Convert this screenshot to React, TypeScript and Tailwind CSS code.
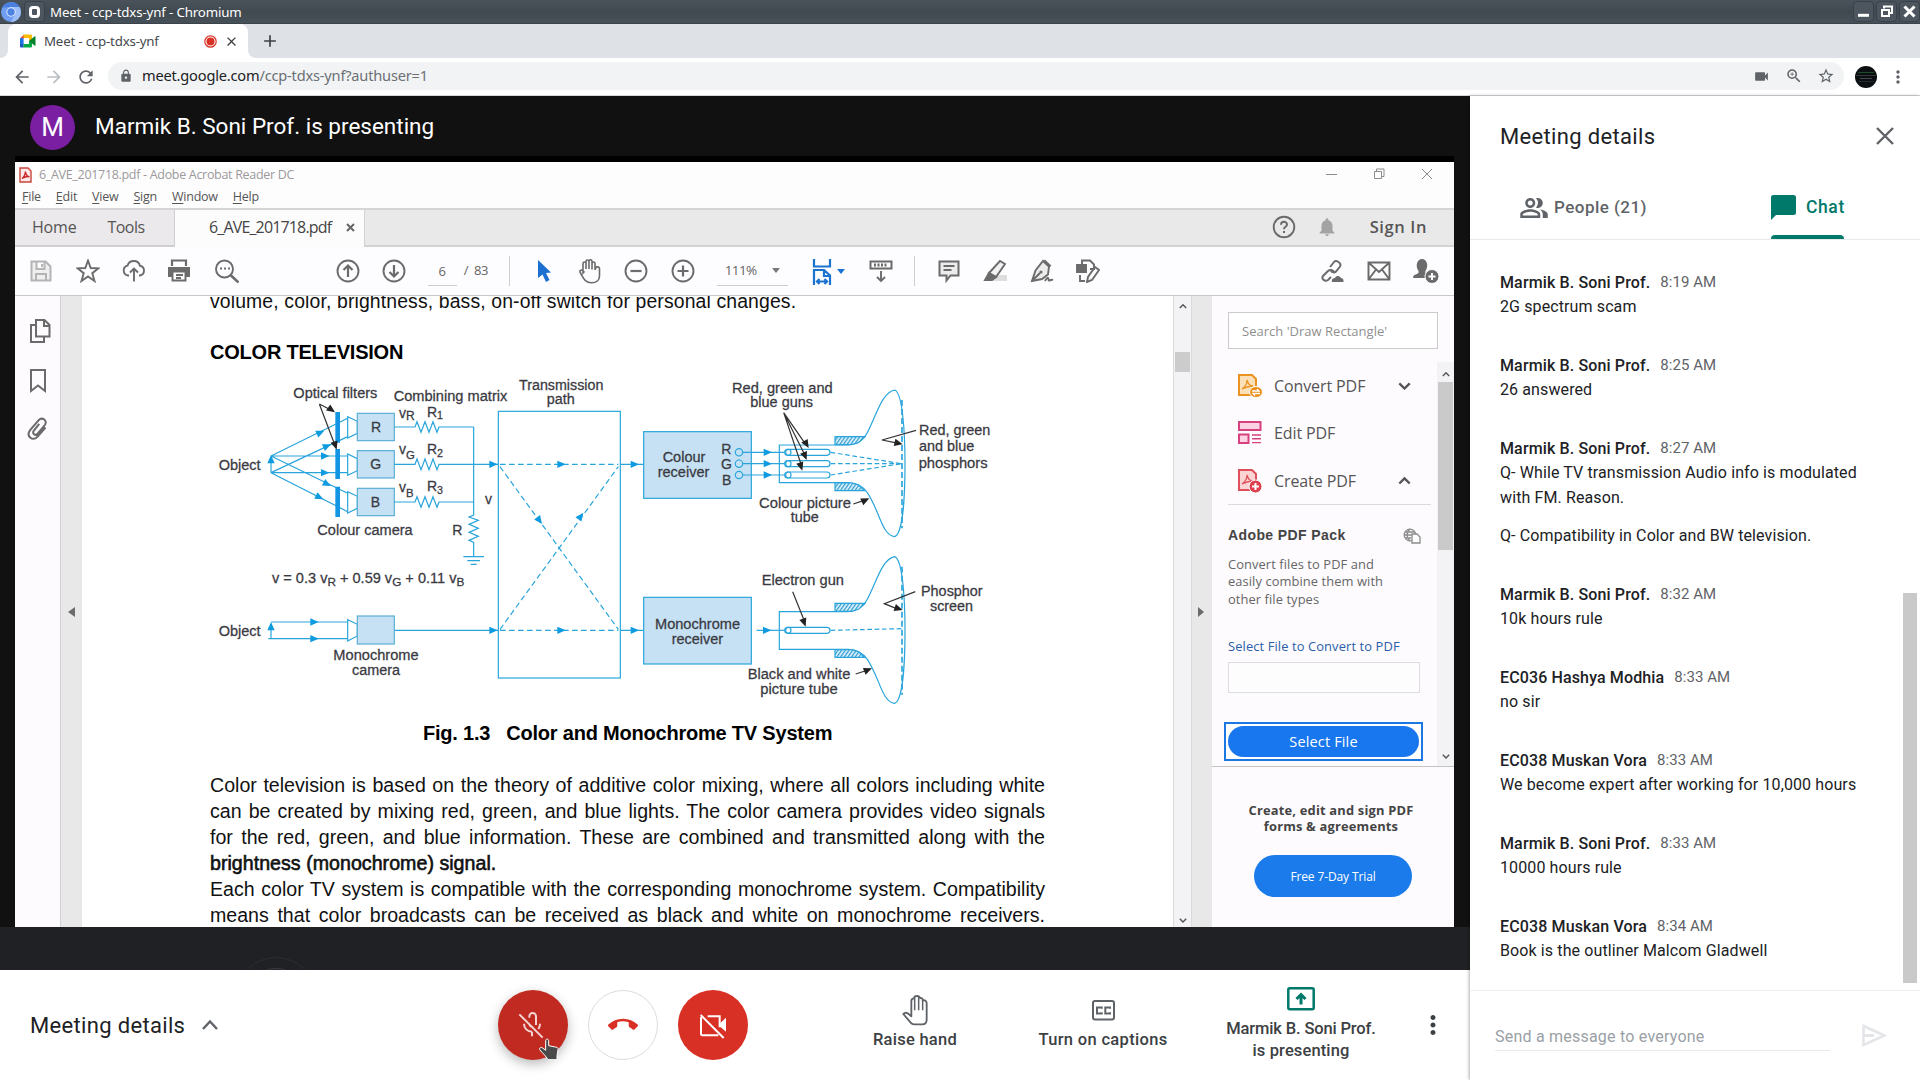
import React from "react";
import {
  MdArrowBack,
  MdArrowForward,
  MdRefresh,
  MdLock,
  MdVideocam,
  MdZoomIn,
  MdStarBorder,
  MdMoreVert,
  MdClose,
  MdAdd,
  MdOutlinePeopleAlt,
  MdCallEnd,
  MdNotifications,
} from "react-icons/md";

const UI = "font-['Noto_Sans',sans-serif]";
const SEGOE = "font-['Open_Sans','Noto_Sans',sans-serif]";

/* ---------- Browser chrome ---------- */

function TitleBar() {
  return (
    <div className={`flex h-6 shrink-0 items-center bg-linear-to-b from-[#4a525b] via-[#414950] to-[#465058] border-b border-[#3b4248] ${UI}`}>
      <svg className="ml-px" width="20" height="20" viewBox="0 0 20 20">
        <circle cx="10" cy="10" r="10" fill="#6f9df0" />
        <path d="M1.2 5.4A10 10 0 0 1 18.6 5H10z" fill="#4a7fe0" />
        <path d="M10 20A10 10 0 0 0 18.6 5H10l4 7z" fill="#9dbdf7" />
        <circle cx="10" cy="10" r="4.7" fill="#dfe9fc" />
        <circle cx="10" cy="10" r="3.7" fill="#4c82e4" />
      </svg>
      <div className="ml-[3px] grid h-[21px] w-[21px] place-items-center rounded-sm border border-[#39414a] bg-[#4d565e]">
        <div className="h-[12px] w-[11px] rounded-[4px] border-[3px] border-white" />
      </div>
      <span className="ml-[5px] pt-px text-[13.3px] leading-6 tracking-[-0.15px] text-white">Meet - ccp-tdxs-ynf - Chromium</span>
      <div className="ml-auto flex gap-[2px]">
        {[0, 1, 2].map((i) => (
          <div key={i} className="grid h-[21px] w-[21px] place-items-center rounded-sm border border-[#39414a] bg-[#4d565e]">
            <svg width="13" height="13" viewBox="0 0 13 13" fill="none" stroke="#fff">
              {i === 0 && <path d="M1 10.3h11" strokeWidth="3" />}
              {i === 1 && (
                <>
                  <path d="M4 3.5V1.5h8v6.500h-2" strokeWidth="2" />
                  <rect x="2" y="5" width="7" height="6" strokeWidth="2" />
                </>
              )}
              {i === 2 && <path d="M1.500 1.500l10 10M11.500 1.500l-10 10" strokeWidth="3" />}
            </svg>
          </div>
        ))}
      </div>
    </div>
  );
}

function TabStrip() {
  return (
    <div className={`flex h-[34px] shrink-0 bg-[#dee1e6] ${UI}`}>
      <div className="flex w-2 items-end bg-white">
        <div className="h-full w-2 rounded-br-lg bg-[#dee1e6]" />
      </div>
      <div className="flex w-[240px] items-center rounded-t-lg bg-white">
        <svg className="ml-3" width="16" height="14" viewBox="0 0 16 14">
          <path d="M4 1v3.500H0L3.500 1z" fill="#ea4335" />
          <path d="M0 4.200h3.600v5.600H0z" fill="#1a73e8" />
          <path d="M0 9.500h3.600V13.500H1a1 1 0 0 1-1-1z" fill="#1558c0" />
          <path d="M3.500.5H11a1 1 0 0 1 1 1v5l-3 .5V4H3.500z" fill="#fbbc04" />
          <path d="M3.500 10H9V7l3-.5v6a1 1 0 0 1-1 1H3.500z" fill="#00ac47" />
          <path d="M9 7l5.500-4.600c.5-.4 1-.1 1 .4v8.400c0 .5-.5.800-1 .4z" fill="#00832d" />
        </svg>
        <span className="ml-2 pt-px text-[13.300px] tracking-[-0.200px] text-[#45494d]">Meet - ccp-tdxs-ynf</span>
        <svg className="ml-auto" width="13" height="13" viewBox="0 0 13 13">
          <circle cx="6.500" cy="6.500" r="5.700" fill="none" stroke="#d93025" strokeWidth="1.200" />
          <circle cx="6.500" cy="6.500" r="4" fill="#d93025" />
        </svg>
        <MdClose className="mr-[9px] ml-[7px] text-[#3c4043]" size={15} />
      </div>
      <div className="w-2 bg-white">
        <div className="h-full rounded-bl-lg bg-[#dee1e6]" />
      </div>
      <MdAdd className="mt-[7px] ml-[4px] text-[#3c4043]" size={20} />
    </div>
  );
}

function AddressBar() {
  return (
    <div className={`flex h-[38px] shrink-0 items-center border-b border-[#d5d7da] bg-white ${UI}`}>
      <MdArrowBack className="ml-[12px] text-[#5f6368]" size={20} />
      <MdArrowForward className="ml-[12px] text-[#bcbfc2]" size={20} />
      <MdRefresh className="ml-[12px] text-[#5f6368]" size={20} />
      <div className="-mt-px ml-[12px] flex h-7 w-[1736px] items-center rounded-full bg-[#f1f3f4]">
        <MdLock className="ml-[11px] text-[#5f6368]" size={14} />
        <span className="ml-[9px] text-[14.600px] tracking-[-0.190px] text-[#6b7074]">
          <span className="text-[#202124]">meet.google.com</span>/ccp-tdxs-ynf?authuser=1
        </span>
        <MdVideocam className="ml-auto text-[#5f6368]" size={17} />
        <MdZoomIn className="ml-[15px] text-[#5f6368]" size={18} />
        <MdStarBorder className="mr-[9px] ml-[14px] text-[#5f6368]" size={18} />
      </div>
      <div className="ml-[11px] flex h-[22px] w-[22px] flex-col items-center justify-center gap-[2px] overflow-hidden rounded-full bg-[#0c0f12]">
        <div className="h-px w-4 bg-[#1e4a28]" />
        <div className="h-px w-5 bg-[#33383d]" />
        <div className="h-px w-3 bg-[#3f454b]" />
        <div className="h-px w-4 bg-[#24292d]" />
      </div>
      <MdMoreVert className="ml-[11px] text-[#5f6368]" size={20} />
    </div>
  );
}

/* ---------- Acrobat ---------- */

function Glyph({ children, w = 24, h = 24, className = "" }: { children: React.ReactNode; w?: number; h?: number; className?: string }) {
  return (
    <svg className={className} width={w} height={h} viewBox={`0 0 ${w} ${h}`} fill="none" stroke="#6b6b6b" strokeWidth="1.900">
      {children}
    </svg>
  );
}

function Slot({ children }: { children: React.ReactNode }) {
  return <div className="flex w-[46.5px] shrink-0 items-center justify-center">{children}</div>;
}

function AcrobatTitle() {
  return (
    <div className={`h-[46px] bg-[#fefdfe] ${SEGOE}`}>
      <div className="flex h-[25px] items-center">
        <svg className="ml-[4px]" width="13" height="16" viewBox="0 0 13 16">
          <path d="M1 1h8l3 3v11H1z" fill="#fde9e7" stroke="#c8433b" strokeWidth="1.400" />
          <path d="M3 11.500c2-1.500 3.300-4 3.400-7 .5 3 2 5 4 5.200-2-.4-4.600.2-7.400 1.800z" fill="none" stroke="#c8262a" strokeWidth="1.400" />
        </svg>
        <span className="ml-[7px] pt-[2px] text-[12.500px] tracking-[-0.310px] text-[#9b999b]">6_AVE_201718.pdf - Adobe Acrobat Reader DC</span>
        <svg className="-mt-[2px] mr-[21px] ml-auto" width="107" height="12" viewBox="0 0 107 12" fill="none" stroke="#8b8b8b">
          <path d="M0 6.500h11M48.500 3.500h7v7h-7zM50.500 3V1h7.500v7.500h-2M96 1l10 10M106 1L96 11" />
        </svg>
      </div>
      <div className="flex h-[21px] items-center gap-[15px] pl-[7px] text-[12.500px] tracking-[-0.240px] text-[#555]">
        {["File", "Edit", "View", "Sign", "Window", "Help"].map((m) => (
          <span key={m}>
            <u className="underline-offset-2">{m[0]}</u>
            {m.slice(1)}
          </span>
        ))}
      </div>
    </div>
  );
}

function AcrobatTabs() {
  return (
    <div className={`flex h-[39px] items-stretch border-t-2 border-[#d6d5d6] bg-[#e9e9e9] text-[16px] text-[#555] ${SEGOE}`}>
      <div className="flex w-[160px] items-center border-r border-b-2 border-[#d0cfd0] bg-[#ebe9eb] pb-px">
        <span className="ml-[17px] tracking-[-0.200px]">Home</span>
        <span className="ml-[31px] tracking-[-0.500px]">Tools</span>
      </div>
      <div className="flex w-[189px] items-center bg-[#fdfcfd] pb-[3px]">
        <span className="ml-[34px] tracking-[-0.850px] text-[#444]">6_AVE_201718.pdf</span>
        <svg className="ml-[15px]" width="9" height="9" viewBox="0 0 9 9" stroke="#666" strokeWidth="2">
          <path d="M1 1l7 7M8 1L1 8" />
        </svg>
      </div>
      <div className="flex flex-1 items-center border-b-2 border-l border-[#d4d3d4] pb-px">
        <Glyph w={24} h={24} className="ml-auto">
          <circle cx="12" cy="12" r="10.300" />
          <path d="M9 9.700c0-4 6-3.800 6-.3 0 2.400-3 2.200-3 4.800M12 16v2" strokeWidth="2" />
        </Glyph>
        <MdNotifications className="ml-[20px] text-[#a3a3a3]" size={22} />
        <span className="mr-[27px] ml-[32px] text-[16.500px] font-semibold tracking-[0.600px] text-[#555]">Sign In</span>
      </div>
    </div>
  );
}

function AcrobatToolbar() {
  return (
    <div className={`flex h-[49px] items-center border-b border-[#c9c8c9] bg-[#fdfcfe] ${SEGOE}`}>
      <div className="w-[2.750px]" />
      <Slot>
        <svg width="22" height="22" viewBox="0 0 22 22" fill="#f0eff0" stroke="#b5b4b5" strokeWidth="2">
          <path d="M1.500 1.500h14l5 5v14h-19zM6.500 2v7h8V2M6 20v-6h10v6M12 4v3" />
        </svg>
      </Slot>
      <Slot>
        <Glyph>
          <path d="M12 1.500l2.700 7.500 7.800.3-6.200 4.900 2.200 7.800-6.500-4.500L5.500 22l2.200-7.800-6.200-4.900L9.300 9z" />
        </Glyph>
      </Slot>
      <Slot>
        <Glyph>
          <path d="M7 16.500H6a5 5 0 0 1-.5-9.800A6.500 6.500 0 0 1 18 6.700a5 5 0 0 1 0 9.800h-1M12 22.500V10M8 13.500l4-4 4 4" />
        </Glyph>
      </Slot>
      <Slot>
        <Glyph className="-ml-[3px]">
          <path d="M5 7V1.500h14V7" strokeWidth="2.200" />
          <path d="M1 8h22v10h-4v-5H5v5H1z" fill="#6b6b6b" stroke="none" />
          <path d="M5.500 12.500h13v9h-13zM9 16h7M9 19h5" />
        </Glyph>
      </Slot>
      <Slot>
        <Glyph>
          <circle cx="9.500" cy="10" r="8.500" />
          <path d="M15.500 16l8 7.500" strokeWidth="2.600" />
          <path d="M5 9.500h2M9 9.500h2M13 9.500h2" />
        </Glyph>
      </Slot>
      <div className="w-[74.500px]" />
      <Slot>
        <Glyph>
          <circle cx="12" cy="12" r="10.500" />
          <path d="M12 18V6.500M7.500 11L12 6.500l4.500 4.500" strokeWidth="2.200" />
        </Glyph>
      </Slot>
      <Slot>
        <Glyph className="-ml-px">
          <circle cx="12" cy="12" r="10.500" />
          <path d="M12 6v11.500M7.500 13l4.500 4.500 4.500-4.500" strokeWidth="2.200" />
        </Glyph>
      </Slot>
      <div className="ml-[10px] h-[29px] w-[29px] border-b border-[#cfcecf] text-center text-[13px] leading-[29px] text-[#666]">6</div>
      <span className="ml-[7px] w-[45px] text-[13px] tracking-[-0.400px] whitespace-pre text-[#666]">/  83</span>
      <div className="h-[30px] w-px bg-[#cfcecf]" />
      <div className="w-[10px]" />
      <Slot>
        <svg className="ml-[3px]" width="15" height="22" viewBox="0 0 15 22" fill="#1a6fd0">
          <path d="M1 0l13 12.500-5 .5 3.500 7-3.500 2-3.500-7.500L1 18z" />
        </svg>
      </Slot>
      <Slot>
        <Glyph w={26} h={26}>
          <path
            d="M7 15V5.500c0-2 3-2 3 0V11 3.500c0-2 3-2 3 0V11 3.200c0-2 3-2 3 0V11.500 5.500c0-2 3-2 3 0V12c0-4 5-4 4.500-1v7c0 4-3 6.800-8 6.800-7 0-8-5-11-9.800-2-3 1.500-4 3.500-1z"
            strokeWidth="1.600"
            transform="translate(-1 0)"
          />
        </Glyph>
      </Slot>
      <Slot>
        <Glyph>
          <circle cx="12" cy="12" r="10.500" />
          <path d="M6.500 12h11" strokeWidth="2.200" />
        </Glyph>
      </Slot>
      <Slot>
        <Glyph>
          <circle cx="12" cy="12" r="10.500" />
          <path d="M6.500 12h11M12 6.500v11" strokeWidth="2.200" />
        </Glyph>
      </Slot>
      <div className="ml-[11px] flex h-[29px] w-[71px] items-center justify-between border-b border-[#cfcecf] pr-[8px] pl-[8px] text-[13.500px] tracking-[-0.600px] text-[#666]">
        111%
        <svg width="8" height="5" fill="#777">
          <path d="M0 0h8L4 5z" />
        </svg>
      </div>
      <div className="ml-[24px] flex w-[33px] items-center justify-between">
        <svg width="20" height="27" viewBox="0 0 20 27" fill="none" stroke="#1a73d0" strokeWidth="2.200">
          <path d="M2 1v7.500h16V1M2 27V12h10l6 5.500V27M12 12v6h6M5 23.500h10M7.500 21L5 23.500 7.500 26M12.500 21l2.500 2.500-2.500 2.500" />
        </svg>
        <svg width="8" height="5" fill="#1a73d0">
          <path d="M0 0h8L4 5z" />
        </svg>
      </div>
      <div className="ml-[13px]" />
      <Slot>
        <Glyph>
          <path d="M1.500 2.500h21v7h-21z" strokeWidth="2" />
          <path d="M5 6h14" strokeDasharray="2 1.500" strokeWidth="3" />
          <path d="M12 12v10M8 18l4 4 4-4" />
        </Glyph>
      </Slot>
      <div className="ml-[10px] h-[30px] w-px bg-[#cfcecf]" />
      <div className="w-[10px]" />
      <Slot>
        <Glyph>
          <path d="M2.500 2.500h19v14h-8l-4 5v-5h-7z" fill="#ececec" strokeWidth="2" />
          <path d="M6.500 7h11M6.500 11h8" />
        </Glyph>
      </Slot>
      <Slot>
        <Glyph>
          <path d="M12 16h12v6H8z" fill="#dedede" stroke="none" />
          <path d="M6 14L17 2l5 3-9 13z" fill="#f2f2f2" />
          <path d="M6 14l-4 7h7l4-3z" fill="#6b6b6b" />
        </Glyph>
      </Slot>
      <Slot>
        <Glyph>
          <path d="M13 2l6 5.500-1 8-6 4.500-10 2 3.500-10.500z" fill="#ececec" />
          <path d="M2 22l8-8M15 22c2-4 3.500-4 3.500-1.500s2-.5 4.500.5" />
          <circle cx="11" cy="13" r="1.600" fill="#6b6b6b" stroke="none" />
          <path d="M14 1.500l6.500 6" strokeWidth="2.400" />
        </Glyph>
      </Slot>
      <Slot>
        <Glyph>
          <path d="M6 6V1.500h8l4 4V10h-4" />
          <path d="M1 6h9v7H1z" fill="#6b6b6b" />
          <path d="M4 16v6h5M19 8l4 3-7 10-5 2 1-5z" />
        </Glyph>
      </Slot>
      <div className="ml-auto" />
      <Slot>
        <Glyph>
          <path d="M10 8l4-5c2-2.500 8 1 6 4.500l-4 5c-1.500 1.500-4 1-5-.5M14 13c-1-2-4-3-6-1l-5 5c-2 3 2 6 5 4l3-3" strokeWidth="2" />
          <path d="M12 23c-1-4 3-4 3-4 2-4 6-1 6 0 3 0 3 4 2 4z" fill="#6b6b6b" stroke="none" />
        </Glyph>
      </Slot>
      <Slot>
        <Glyph>
          <path d="M1.500 3.500h21v17h-21zM1.500 3.500L12 13 22.500 3.500M1.500 20.500l7.500-10M22.500 20.500l-7.500-10" />
        </Glyph>
      </Slot>
      <Slot>
        <Glyph w={26} className="ml-px">
          <path d="M0 19c0-5 7-3 5.500-7C2 7 4 0 9 0s7 7 3.500 12c-1 2 1 3 2 3v4z" fill="#6b6b6b" stroke="none" />
          <circle cx="19" cy="17.500" r="7" fill="#6b6b6b" stroke="#fff" strokeWidth="1" />
          <path d="M15.500 17.500h7M19 14v7" stroke="#fff" />
        </Glyph>
      </Slot>
      <div className="w-[5.750px]" />
    </div>
  );
}

function LeftRail() {
  return (
    <>
      <div className="flex w-[46px] shrink-0 flex-col items-center border-r border-[#d3d2d3] bg-[#fdfbfe] pt-[22px]">
        <Glyph w={22} h={26} className="ml-[4px]">
          <path d="M7 2h8.500l5 5v11.500H7zM15 2v6h5.500M7 7H2v17h13v-5" strokeWidth="2" />
        </Glyph>
        <Glyph w={18} h={26} className="mt-[24px]">
          <path d="M2 2h14v21l-7-5.500L2 23z" strokeWidth="2" />
        </Glyph>
        <Glyph w={24} h={26} className="mt-[22px]">
          <path
            d="M13.500 8L7.500 14.500c-2 3 1.500 5.500 3.700 3.200L19 9.500c3.500-4-2-9-6-5L4 13.500c-5 6 2 12 7 7l8.500-8.500"
            transform="rotate(-4 12 12)"
            strokeWidth="2"
          />
        </Glyph>
      </div>
      <div className="flex w-[21px] shrink-0 items-center bg-[#e8e8e9]">
        <svg className="ml-[7px]" width="7" height="10" fill="#6b6b6b">
          <path d="M7 0v10L0 5z" />
        </svg>
      </div>
    </>
  );
}

const RES = "l6 -16 12 32 12 -32 12 32 12 -32 12 32 6 -16";

function L({ x, y, w, children, s = 42 }: { x: number; y: number; w?: number; children: React.ReactNode; s?: number }) {
  return (
    <text x={x} y={y} fontSize={s} textLength={w} lengthAdjust="spacingAndGlyphs" stroke="#3a3a42" strokeWidth="0.8" fill="#3a3a42">
      {children}
    </text>
  );
}

function Head({ x, y, a = 0, c = "#0e9be0" }: { x: number; y: number; a?: number; c?: string }) {
  return <path d="M0 0L-25 -11V11Z" transform={`translate(${x} ${y}) rotate(${a})`} fill={c} stroke="none" />;
}

function Tube() {
  return (
    <>
      <path
        d="M1738 465H1945Q1985 462 2002 428C2030 375 2045 308 2084 300C2108 308 2115 430 2115 521C2115 620 2108 732 2084 740C2045 735 2040 665 2002 608Q1980 578 1945 578H1738Z"
        fill="#fff"
      />
      <path d="M2106 330V715" strokeDasharray="18 9" strokeWidth="5" />
      <path d="M1905 464V440H1995L1975 458L1955 464ZM1905 579V602H1993L1975 585L1955 579Z" fill="url(#hatch)" />
    </>
  );
}

function Gun({ y }: { y: number }) {
  return (
    <>
      <rect x="1754" y={y - 9} width="136" height="18" rx="9" fill="#fff" />
      <ellipse cx="1765" cy={y} rx="8" ry="9" />
    </>
  );
}

function Diagram() {
  return (
    <svg className="block" width="835" height="345" viewBox="30 234 2505 1035" fill="none" stroke="#2aa5dc" strokeWidth="3.600" fontFamily="Liberation Sans">
      <defs>
        <pattern id="hatch" width="9" height="9" patternUnits="userSpaceOnUse" patternTransform="rotate(35)">
          <rect width="9" height="9" fill="#e5f4fc" stroke="none" />
          <path d="M2 0V9" stroke="#1c93cf" strokeWidth="3.500" />
        </pattern>
      </defs>

      <L x={280} y={325} w={252}>Optical filters</L>
      <L x={581} y={332} w={341}>Combining matrix</L>
      <L x={957} y={300} w={253}>Transmission</L>
      <L x={1040} y={343} w={84}>path</L>
      <L x={56} y={540} w={126}>Object</L>
      <L x={352} y={735} w={286}>Colour camera</L>
      <L x={56} y={1038} w={126}>Object</L>
      <L x={400} y={1110} w={256}>Monochrome</L>
      <L x={456} y={1154} w={144}>camera</L>

      <path d="M213 548V505M213 498L443 385M213 548L443 440M213 498H443M213 548H443M213 498L443 610M213 548L443 665" />
      <Head x={213} y={495} a={-90} />
      <Head x={373} y={422} a={-25} />
      <Head x={393} y={463} a={-24} />
      <Head x={388} y={498} />
      <Head x={388} y={548} />
      <Head x={393} y={588} a={27} />
      <Head x={370} y={628} a={27} />
      <path d="M413 366V458M413 477V567M413 590V681" strokeWidth="14" stroke="#1296e4" />
      {[0, 112, 225].map((dy) => (
        <g key={dy} transform={`translate(0 ${dy})`}>
          <path d="M443 380V444L472 430V394Z" fill="#fff" />
          <rect x="472" y="370" width="111" height="82" fill="#c5e1f3" stroke="#5aaed6" />
          <path d={`M583 411H645 ${RES}H821`} />
        </g>
      ))}
      <path d="M821 411V675l-14 6 28 10-28 12 28 12-28 12 28 12-28 12 14 6V800M790 800H852M802 812H840M812 823H830" />
      <L x={513} y={427}>R</L>
      <L x={511} y={538}>G</L>
      <L x={512} y={651}>B</L>
      <L x={597} y={383}>v</L>
      <L x={618} y={390} s={36}>R</L>
      <L x={597} y={492}>v</L>
      <L x={618} y={506} s={34}>G</L>
      <L x={597} y={606}>v</L>
      <L x={618} y={621} s={34}>B</L>
      <L x={681} y={381}>R</L>
      <L x={711} y={388} s={32}>1</L>
      <L x={681} y={492}>R</L>
      <L x={711} y={501} s={32}>2</L>
      <L x={681} y={602}>R</L>
      <L x={711} y={612} s={32}>3</L>
      <L x={757} y={736}>R</L>
      <L x={855} y={643}>v</L>
      <text x="216" y="878" fontSize="42" textLength="577" lengthAdjust="spacingAndGlyphs" stroke="#3a3a42" strokeWidth="0.8" fill="#3a3a42">
        v = 0.3 v<tspan fontSize="34" dy="10">R</tspan>
        <tspan dy="-10"> + 0.59 v</tspan>
        <tspan fontSize="34" dy="10">G</tspan>
        <tspan dy="-10"> + 0.11 v</tspan>
        <tspan fontSize="34" dy="10">B</tspan>
      </text>

      <path d="M358 342L400 364M358 342L408 474" stroke="#333" />
      <Head x={405} y={367} a={35} c="#222" />
      <Head x={410} y={479} a={72} c="#222" />

      <path d="M213 1046V1003M205 1046H443M213 996H443M583 1021H895" />
      <Head x={213} y={996} a={-90} />
      <Head x={356} y={996} />
      <Head x={356} y={1046} />
      <path d="M443 989V1053L472 1038V1003Z" fill="#fff" />
      <rect x="472" y="978" width="111" height="84" fill="#c5e1f3" stroke="#5aaed6" />

      <rect x="895" y="364" width="366" height="800" />
      <path d="M821 523H895M1261 523H1330M1261 1021H1330" />
      <path d="M900 523H1255M900 1021H1255M900 530L1255 1018M900 1018L1255 530" strokeDasharray="17 10" />
      <Head x={893} y={523} />
      <Head x={893} y={1021} />
      <Head x={1097} y={523} />
      <Head x={1097} y={1021} />
      <Head x={1026} y={702} a={54} />
      <Head x={1150} y={668} a={-54} />
      <Head x={1317} y={523} />
      <Head x={1317} y={1021} />

      <rect x="1331" y="425" width="323" height="200" fill="#c5e1f3" />
      <rect x="1331" y="922" width="323" height="200" fill="#c5e1f3" />
      <L x={1388} y={517} w={128}>Colour</L>
      <L x={1373} y={562} w={155}>receiver</L>
      <L x={1564} y={491}>R</L>
      <L x={1563} y={538}>G</L>
      <L x={1566} y={584}>B</L>
      <L x={1365} y={1016} w={255}>Monochrome</L>
      <L x={1415} y={1061} w={154}>receiver</L>

      <Tube />
      <g transform="translate(0 500)">
        <Tube />
      </g>
      {[487, 521, 555].map((y) => (
        <g key={y}>
          <circle cx="1617" cy={y} r="11" />
          <path d={`M1628 ${y}H1754`} />
          <Head x={1716} y={y} />
          <Gun y={y} />
          <path d={`M1892 ${y}L2104 521`} strokeDasharray="14 8" />
        </g>
      ))}
      <path d="M1670 1021H1754" />
      <Head x={1714} y={1021} />
      <Gun y={1021} />
      <path d="M1892 1021L2104 1016" strokeDasharray="14 8" />

      <L x={1596} y={309} w={302}>Red, green and</L>
      <L x={1651} y={350} w={188}>blue guns</L>
      <L x={2157} y={435} w={214}>Red, green</L>
      <L x={2157} y={483} w={166}>and blue</L>
      <L x={2156} y={534} w={207}>phosphors</L>
      <L x={1677} y={654} w={276}>Colour picture</L>
      <L x={1772} y={695} w={84}>tube</L>
      <L x={1685} y={885} w={247}>Electron gun</L>
      <L x={2163} y={919} w={185}>Phosphor</L>
      <L x={2190} y={962} w={129}>screen</L>
      <L x={1643} y={1168} w={308}>Black and white</L>
      <L x={1681} y={1212} w={232}>picture tube</L>

      <g stroke="#333">
        <path d="M1751 368L1815 460M1751 368L1812 490M1751 368L1804 525M2148 421L2046 450L2085 458M1960 642L1990 632M1778 905L1812 990M2146 905L2053 941L2088 955M1967 1152L1995 1143" />
      </g>
      <Head x={1826} y={474} a={60} c="#222" />
      <Head x={1820} y={510} a={68} c="#222" />
      <Head x={1807} y={542} a={72} c="#222" />
      <Head x={2108} y={463} a={14} c="#222" />
      <Head x={2008} y={625} a={-25} c="#222" />
      <Head x={1817} y={1010} a={70} c="#222" />
      <Head x={2108} y={960} a={18} c="#222" />
      <Head x={2016} y={1135} a={-22} c="#222" />
    </svg>
  );
}

const PARA_A = [
  "Color television is based on the theory of additive color mixing, where all colors including white",
  "can be created by mixing red, green, and blue lights. The color camera provides video signals",
  "for the red, green, and blue information. These are combined and transmitted along with the",
];
const PARA_B = [
  "Each color TV system is compatible with the corresponding monochrome system. Compatibility",
  "means that color broadcasts can be received as black and white on monochrome receivers.",
];

function Line({ children }: { children: React.ReactNode }) {
  return <p className="h-[26px] w-[835px] leading-[26px] whitespace-nowrap [text-align-last:justify]">{children}</p>;
}

function PdfPage() {
  return (
    <div className="h-[631px] w-[1091px] shrink-0 overflow-hidden bg-white pl-[128px] font-['Liberation_Sans',Arial,sans-serif] text-[19.600px] text-[#111]">
      <div className="-mt-[7px] h-[26px] text-[19.400px] leading-[25px] tracking-[0.130px]">volume, color, brightness, bass, on-off switch for personal changes.</div>
      <h2 className="mt-[24px] h-[26px] text-[20px] leading-[26px] font-bold tracking-[-0.220px] text-black">COLOR TELEVISION</h2>
      <div className="mt-[3px]">
        <Diagram />
      </div>
      <div className="mt-[7px] h-[26px] pl-[213px] text-[20px] leading-[26px] font-bold tracking-[-0.210px] whitespace-pre text-black">Fig. 1.3   Color and Monochrome TV System</div>
      <div className="mt-[26px]">
        {PARA_A.map((t) => (
          <Line key={t}>{t}</Line>
        ))}
        <p className="h-[26px] leading-[26px] tracking-[0.030px] [-webkit-text-stroke:0.600px_#111]">brightness (monochrome) signal.</p>
        {PARA_B.map((t) => (
          <Line key={t}>{t}</Line>
        ))}
      </div>
    </div>
  );
}

function Chevron({ up = false, w = 13, c = "#555" }: { up?: boolean; w?: number; c?: string }) {
  return (
    <svg width={w} height={w * 0.6} viewBox="0 0 10 6" fill="none" stroke={c} strokeWidth="1.800">
      <path d={up ? "M1 5l4-4 4 4" : "M1 1l4 4 4-4"} />
    </svg>
  );
}

function ToolRow({ icon, label, chev }: { icon: React.ReactNode; label: string; chev?: "up" | "down" }) {
  return (
    <div className="flex h-[47.500px] items-center pl-[9px]">
      <div className="w-[37px]">{icon}</div>
      <span className="text-[16px] tracking-[-0.100px] text-[#555]">{label}</span>
      {chev && (
        <div className="mr-[26px] ml-auto">
          <Chevron up={chev === "up"} />
        </div>
      )}
    </div>
  );
}

function PdfIcon({ stroke, fill, children }: { stroke: string; fill: string; children: React.ReactNode }) {
  return (
    <svg width="26" height="26" viewBox="0 0 26 26" fill="none">
      <path d="M2 2h13l4 4v16H2z" fill={fill} stroke={stroke} strokeWidth="2" />
      <path d="M5 16c3-2 5-5 5-9 1 4 3 6 6 6-4 0-7 1-11 3z" stroke={stroke} strokeWidth="1.300" />
      {children}
    </svg>
  );
}

function ToolsPanel() {
  return (
    <div className={`flex w-[242px] shrink-0 flex-col bg-[#fdfbfe] ${SEGOE}`}>
      <div className="mt-[16px] ml-[16px] flex h-[37px] w-[210px] shrink-0 items-center border border-[#cccbcc] bg-white pt-[2px] pl-[13px] text-[13px] tracking-[0.020px] text-[#8f8f8f]">
        Search 'Draw Rectangle'
      </div>
      <div className="mt-[13px] flex h-[405px] shrink-0 border-b border-[#c4c3c4]">
        <div className="w-[225px] pl-[16px]">
          <ToolRow
            label="Convert PDF"
            chev="down"
            icon={
              <PdfIcon stroke="#ea9322" fill="#fbe0b8">
                <ellipse cx="19" cy="19" rx="6.500" ry="5.500" fill="#ea8d14" stroke="#fff" />
                <path d="M15 18h7l-2-2M23 20.500h-7l2 2" stroke="#fff" strokeWidth="1.300" />
              </PdfIcon>
            }
          />
          <ToolRow
            label="Edit PDF"
            icon={
              <svg width="26" height="26" viewBox="0 0 26 26" fill="#fbd3e3" stroke="#d8417f" strokeWidth="2">
                <rect x="2" y="2" width="21.500" height="8" />
                <rect x="2" y="14.500" width="9.500" height="8.500" />
                <path d="M15 15h9M15 18.800h9M15 22.600h9" strokeWidth="1.400" />
              </svg>
            }
          />
          <ToolRow
            label="Create PDF"
            chev="up"
            icon={
              <PdfIcon stroke="#e0505c" fill="#fad4d3">
                <circle cx="18.500" cy="18.500" r="6.500" fill="#df3f4d" stroke="#fff" />
                <path d="M15 18.500h7M18.500 15v7" stroke="#fff" strokeWidth="2" />
              </PdfIcon>
            }
          />
          <div className="-mt-px h-px w-[203px] bg-[#dcdbdc]" />
          <div className="mt-[19px] flex h-[24px] w-[193px] items-center justify-between">
            <span className="font-['Liberation_Sans',Arial,sans-serif] text-[14px] font-bold tracking-[0.400px] text-[#444]">Adobe PDF Pack</span>
            <svg width="18" height="16" viewBox="0 0 18 16" fill="none" stroke="#8c8c8c" strokeWidth="1.300">
              <circle cx="7" cy="7" r="5.800" />
              <path d="M1 7h8M2 4h10M2 10h6M7 1c-4 4-4 8 0 12" />
              <path d="M9 6h5l3 3v6H9z" fill="#fff" />
            </svg>
          </div>
          <p className="mt-[8px] text-[12.900px] leading-[17.800px] tracking-[0.080px] text-[#666]">
            Convert files to PDF and
            <br />
            easily combine them with
            <br />
            other file types
          </p>
          <p className="mt-[28px] h-[18px] text-[12.900px] leading-[18px] tracking-[0.110px] text-[#2b5ea8]">Select File to Convert to PDF</p>
          <div className="mt-[7px] h-[31px] w-[192px] border border-[#dedddf] bg-[#fdfdfd]" />
          <div className="mt-[29px] -ml-[4px] h-[39px] w-[199px] border-2 border-[#1b78e2] bg-white p-[2px]">
            <div className="flex h-full items-center justify-center rounded-full bg-[#1877ee] text-[14.500px] tracking-[0.150px] text-white">Select File</div>
          </div>
        </div>
        <div className="flex w-[17px] flex-col items-center bg-[#f3f2f4] pt-[10px]">
          <Chevron up w={8} />
          <div className="mt-[5px] h-[168px] w-[15px] bg-[#cacaca]" />
          <div className="mt-auto mb-[7px]">
            <Chevron w={8} />
          </div>
        </div>
      </div>
      <div className="mt-[35px] text-center text-[12.900px] leading-[16px] font-bold tracking-[0.180px] text-[#444]">
        <div className="-ml-[4px]">
          Create, edit and sign PDF
          <br />
          forms &amp; agreements
        </div>
      </div>
      <div className="mt-[21px] ml-[42px] flex h-[42px] w-[158px] items-center justify-center rounded-full bg-[#1b7bea] pt-px text-[12px] tracking-[-0.120px] text-white">
        Free 7-Day Trial
      </div>
    </div>
  );
}

function Acrobat() {
  return (
    <div className="mx-[15px] mt-[60px] flex h-[771px] w-[1439px] flex-col overflow-hidden border-t-[6px] border-black bg-white">
      <AcrobatTitle />
      <AcrobatTabs />
      <AcrobatToolbar />
      <div className="flex h-[631px] shrink-0 overflow-hidden">
        <LeftRail />
        <PdfPage />
        <div className="flex w-[19px] shrink-0 flex-col items-center border-x border-[#dbdadb] bg-[#f3f2f4] pt-[8px]">
          <Chevron up w={8} />
          <div className="mt-[43px] h-[20px] w-[15px] bg-[#cdcccd]" />
          <div className="mt-auto mb-[4px]">
            <Chevron w={8} />
          </div>
        </div>
        <div className="flex w-[20px] shrink-0 items-center bg-[#e8e8e9] pl-[6px]">
          <svg width="6" height="10" fill="#6b6b6b">
            <path d="M0 0v10l6-5z" />
          </svg>
        </div>
        <ToolsPanel />
      </div>
    </div>
  );
}

/* ---------- Meet ---------- */

const MEET = "font-[Roboto,sans-serif]";

function BottomBar() {
  return (
    <div className={`flex h-[110px] w-[1470px] shrink-0 items-center overflow-hidden bg-white ${MEET}`}>
      <span className="ml-[30px] w-[171px] text-[22px] tracking-[0.330px] text-[#202124]">Meeting details</span>
      <svg width="18" height="12" viewBox="0 0 18 12" fill="none" stroke="#5f6368" strokeWidth="2.400">
        <path d="M2 10l7-7.500 7 7.500" />
      </svg>
      <div className="relative ml-[279px] grid h-[70px] w-[70px] shrink-0 place-items-center rounded-full bg-[#c12a21] shadow-[0_4px_12px_rgba(0,0,0,0.28)]">
        <svg className="-mt-px -ml-[3px]" width="27" height="28" viewBox="115 246 81 84" fill="none" stroke="#f3d4d2" strokeWidth="6">
          <path d="M119 256L189 326M149 266V262a10 10 0 0 1 20 0V288M149 284a10 10 0 0 0 12 10M133 284c0 14 10 24 24 24 M176 300c4-5 5-10 5-16M157 308V322" />
        </svg>
        <svg className="absolute top-[48px] left-[40px]" width="22" height="23" viewBox="175 324 66 69">
          <path
            d="M198 332c0-6 9-6 9 0v15l24 5c4 1 5 3 4 7l-3 18v12h-27c-6-11-15-18-25-30-2-5 4-9 9-5l9 7z"
            fill="#4a4a4a"
            stroke="#fff"
            strokeWidth="3"
          />
        </svg>
      </div>
      <div className="ml-[20px] grid h-[70px] w-[70px] shrink-0 place-items-center rounded-full border border-[#dadce0]">
        <MdCallEnd className="text-[#d93025]" size={30} />
      </div>
      <div className="ml-[20px] grid h-[70px] w-[70px] shrink-0 place-items-center rounded-full bg-[#d93025]">
        <svg className="mt-[3px] -ml-px" width="28" height="28" viewBox="656 249 84 84" fill="none" stroke="#fff" strokeWidth="6">
          <path d="M661 255L730 324M682 259H718V292M718 285L734 299V270L718 285M662 262V312a4 4 0 0 0 4 4H714" />
          <path d="M718 284L737 267V304Z" fill="#fff" stroke="none" />
        </svg>
      </div>
      <div className="ml-[107px] flex h-[110px] w-[120px] flex-col items-center text-[16.500px] font-medium text-[#3c4043]">
        <svg className="mt-[24px]" width="28" height="33" viewBox="1263 191 84 99" fill="none" stroke="#5f6368" strokeWidth="5.500">
          <path d="M1294 258V212q0-8 8-8 1-7 8-7 8-1 10 6 8-1 8 7 11-2 12 8V268q0 14-14 14h-24q-6 0-10-5l-22-26q8-8 16 0z" strokeLinejoin="round" />
          <path d="M1304 204V240M1316 200V240M1328 208V240" strokeWidth="4.500" />
        </svg>
        <span className="mt-px leading-[24px] tracking-[0.260px] whitespace-nowrap">Raise hand</span>
      </div>
      <div className="ml-[48px] flex h-[110px] w-[160px] flex-col items-center text-[16.500px] font-medium text-[#3c4043]">
        <svg className="mt-[30px]" width="23" height="21" viewBox="0 0 23 21" fill="none" stroke="#5f6368" strokeWidth="2">
          <rect x="1" y="1" width="21" height="18.500" rx="2" />
          <path d="M9.700 8.800V7.500H5v6h4.700v-1.300M18 8.800V7.500h-4.700v6H18v-1.300" />
        </svg>
        <span className="mt-[7px] leading-[24px] tracking-[0.320px] whitespace-nowrap">Turn on captions</span>
      </div>
      <div className="ml-[28px] flex h-[110px] w-[180px] flex-col items-center text-[16.500px] font-medium text-[#3c4043]">
        <svg className="mt-[17px]" width="28" height="24" viewBox="0 0 28 24" fill="none" stroke="#00796b" strokeWidth="2.500">
          <rect x="1.300" y="1.300" width="25.400" height="21" rx="1.500" />
          <path d="M14 17.500V8M9.500 12L14 7.500l4.500 4.500" strokeWidth="3" />
        </svg>
        <span className="mt-[7px] leading-[22px] tracking-[-0.150px] whitespace-nowrap">Marmik B. Soni Prof.</span>
        <span className="leading-[22px] tracking-[0.120px] whitespace-nowrap">is presenting</span>
      </div>
      <MdMoreVert className="ml-[27px] shrink-0 text-[#3c4043]" size={30} />
    </div>
  );
}

function Stage() {
  return (
    <div className="flex w-[1470px] shrink-0 flex-col bg-[#111]">
      <div className="h-[831px] shrink-0">
        <div className={`-mb-[60px] flex h-[60px] items-center pt-[2px] ${MEET}`}>
          <div className="ml-[30px] grid h-[45px] w-[45px] place-items-center rounded-full bg-[#7b1fa2] text-[26px] text-white">M</div>
          <span className="ml-[20px] text-[22.500px] tracking-[0px] text-white">Marmik B. Soni Prof. is presenting</span>
        </div>
        <Acrobat />
      </div>
      <div className="h-[43px] shrink-0 overflow-hidden bg-[#202124]">
        <div className="mt-[30px] ml-[235px] h-[82px] w-[82px] rounded-full border border-[#2d2e32] p-[10px]">
          <div className="h-full rounded-full border border-[#3b3d41]" />
        </div>
      </div>
      <BottomBar />
    </div>
  );
}

const MESSAGES = [
  { who: "Marmik B. Soni Prof.", at: "8:19 AM", text: ["2G spectrum scam"] },
  { who: "Marmik B. Soni Prof.", at: "8:25 AM", text: ["26 answered"] },
  {
    who: "Marmik B. Soni Prof.",
    at: "8:27 AM",
    text: ["Q- While TV transmission Audio info is modulated with FM. Reason.", "Q- Compatibility in Color and BW television."],
  },
  { who: "Marmik B. Soni Prof.", at: "8:32 AM", text: ["10k hours rule"] },
  { who: "EC036 Hashya Modhia", at: "8:33 AM", text: ["no sir"] },
  { who: "EC038 Muskan Vora", at: "8:33 AM", text: ["We become expert after working for 10,000 hours"] },
  { who: "Marmik B. Soni Prof.", at: "8:33 AM", text: ["10000 hours rule"] },
  { who: "EC038 Muskan Vora", at: "8:34 AM", text: ["Book is the outliner Malcom Gladwell"] },
];

function ChatPanel() {
  return (
    <aside className={`flex h-[984px] w-[450px] flex-col bg-white shadow-[-1px_0_3px_rgba(0,0,0,0.3)] ${MEET}`}>
      <div className="flex h-[80px] shrink-0 items-center pl-[30px]">
        <h1 className="text-[22px] tracking-[0.340px] text-[#202124]">Meeting details</h1>
        <svg className="mr-[26px] ml-auto" width="18" height="18" viewBox="0 0 18 18" stroke="#5f6368" strokeWidth="2.400">
          <path d="M1 1l16 16M17 1L1 17" />
        </svg>
      </div>
      <div className="flex h-[64px] shrink-0 items-stretch border-b border-[#e8eaed]">
        <div className="flex w-[225px] items-center justify-center gap-[5px] pt-px pl-px text-[17px] font-medium tracking-[0.460px] text-[#5f6368]">
          <MdOutlinePeopleAlt size={30} />
          <span>People (21)</span>
        </div>
        <div className="flex w-[225px] justify-center">
          <div className="flex w-[73px] flex-col">
            <div className="flex flex-1 items-center gap-[10px] pt-[4px] text-[17.500px] font-medium tracking-[0.600px] text-[#00796b]">
              <svg className="shrink-0" width="25" height="25" viewBox="0 0 25 25" fill="currentColor">
                <path d="M2.500 0h20A2.500 2.500 0 0 1 25 2.500v15a2.500 2.500 0 0 1-2.500 2.500H5l-5 5V2.500A2.500 2.500 0 0 1 2.500 0z" />
              </svg>
              <span>Chat</span>
            </div>
            <div className="h-[4px] w-[73px] rounded-t bg-[#00796b]" />
          </div>
        </div>
      </div>
      <div className="flex flex-1 justify-between overflow-hidden">
        <div className="w-[390px] pt-[31px] pl-[30px]">
          {MESSAGES.map((m, i) => (
            <div key={i} className="mb-[35px]">
              <div className="flex h-[23px] items-center">
                <span className="text-[16px] font-medium tracking-[0.130px] text-[#202124]">{m.who}</span>
                <span className="ml-[10px] text-[15px] tracking-[0.050px] text-[#5f6368]">{m.at}</span>
              </div>
              <div className="flex flex-col gap-[13px] text-[16px] leading-[25px] tracking-[0.110px] text-[#202124]">
                {m.text.map((t) => (
                  <p key={t}>{t}</p>
                ))}
              </div>
            </div>
          ))}
        </div>
        <div className="mt-[353px] mr-[3px] h-[390px] w-[14px] bg-[#c9c9c9]" />
      </div>
      <div className="flex h-[90px] shrink-0 items-center border-t border-[#eceef0] pl-[25px]">
        <div className="mt-[1px] flex h-[30px] w-[335px] items-center border-b border-[#e8eaed] pt-[2px] text-[16px] tracking-[0.220px] text-[#9aa0a6]">Send a message to everyone</div>
        <svg className="-mt-px ml-[32px]" width="25" height="23" viewBox="0 0 25 23" fill="none" stroke="#e3e5e9" strokeWidth="2.500">
          <path d="M1.500 2L22.500 11.500L1.500 21V2Z" />
          <path d="M2 11.500H12" strokeWidth="3" />
        </svg>
      </div>
    </aside>
  );
}

export default function App() {
  return (
    <div className="flex h-[1080px] w-[1920px] flex-col overflow-hidden bg-white">
      <TitleBar />
      <TabStrip />
      <AddressBar />
      <div className="flex h-[984px]">
        <Stage />
        <ChatPanel />
      </div>
    </div>
  );
}
